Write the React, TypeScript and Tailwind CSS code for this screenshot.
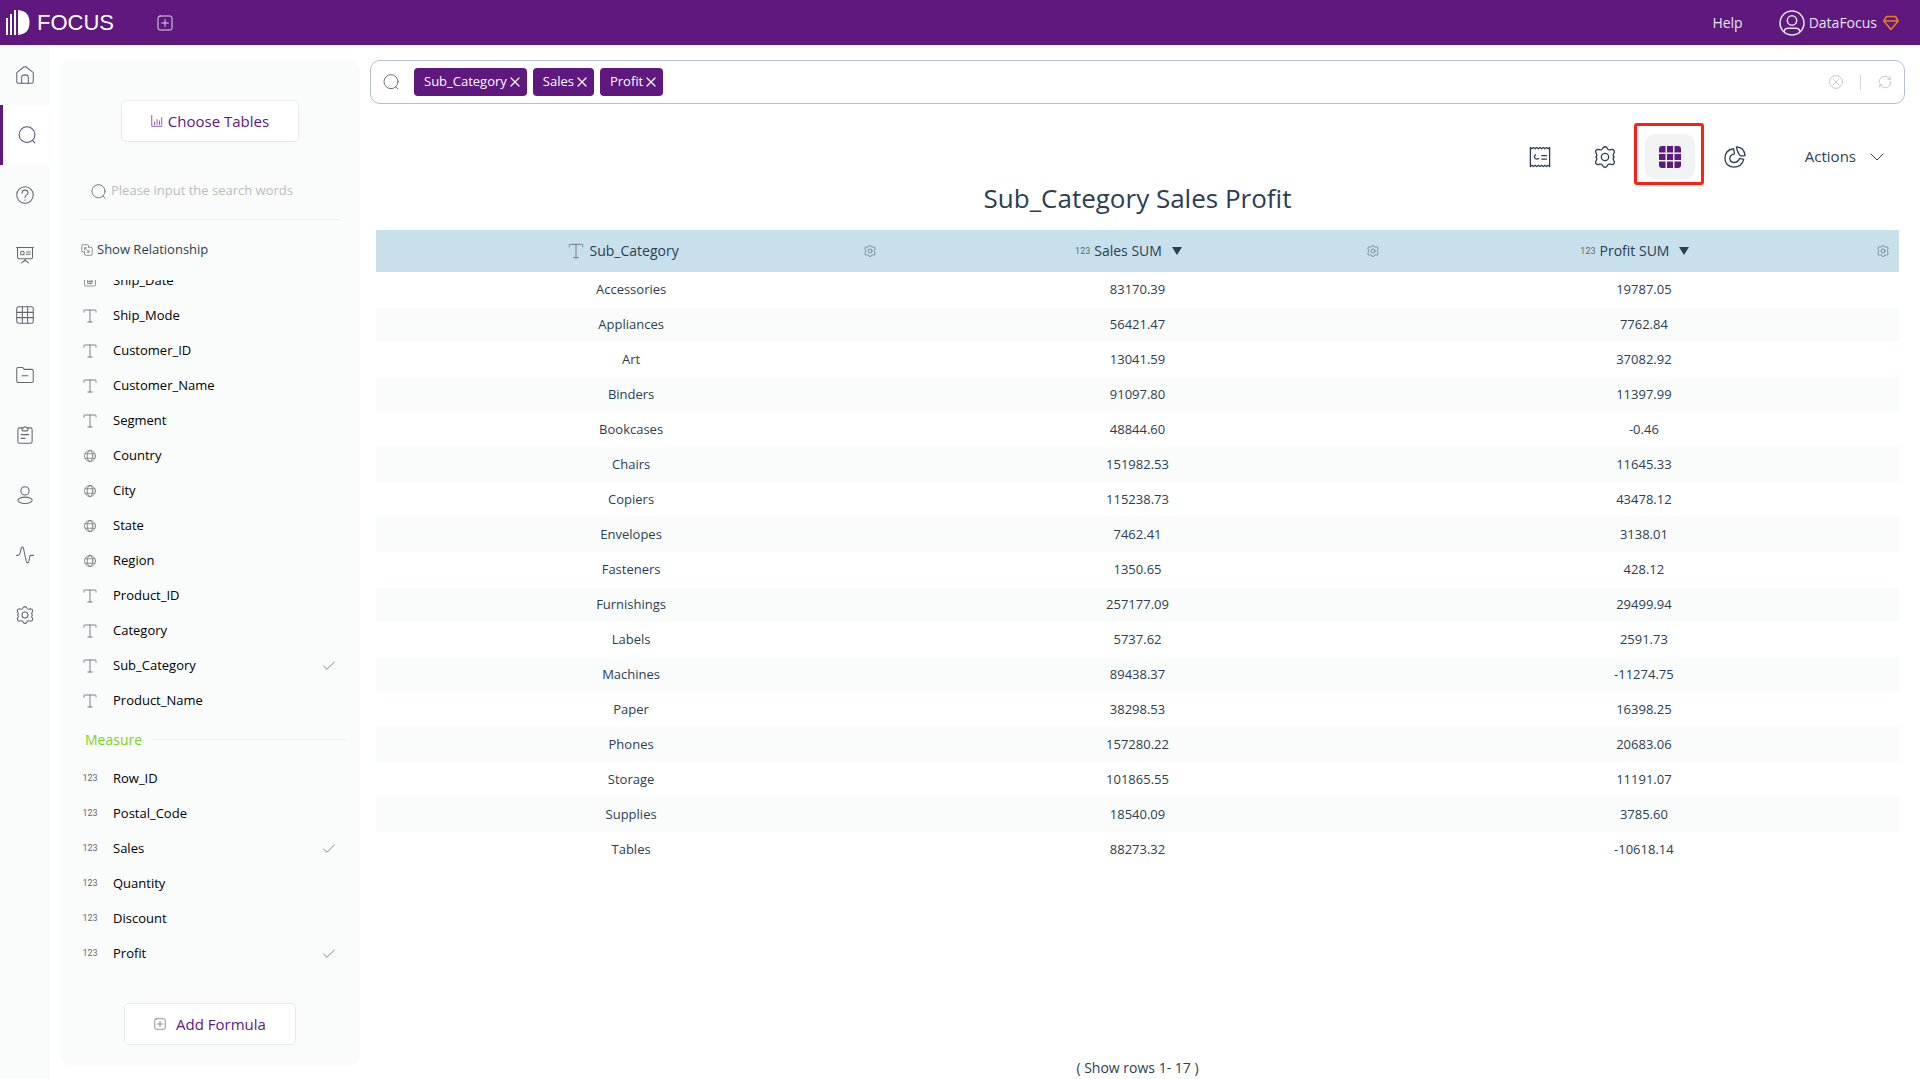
import { useState } from "react";
import type { ReactNode } from "react";
import { Check, ChevronDown, Type, X } from "lucide-react";
import clsx from "clsx";

type FieldKind = "text" | "date" | "geo" | "number";

interface Field {
  name: string;
  kind: FieldKind;
}

interface IconProps {
  className?: string;
  children?: ReactNode;
}

const attributes: Field[] = [
  { name: "Ship_Date", kind: "date" },
  { name: "Ship_Mode", kind: "text" },
  { name: "Customer_ID", kind: "text" },
  { name: "Customer_Name", kind: "text" },
  { name: "Segment", kind: "text" },
  { name: "Country", kind: "geo" },
  { name: "City", kind: "geo" },
  { name: "State", kind: "geo" },
  { name: "Region", kind: "geo" },
  { name: "Product_ID", kind: "text" },
  { name: "Category", kind: "text" },
  { name: "Sub_Category", kind: "text" },
  { name: "Product_Name", kind: "text" },
];

const measures: Field[] = [
  { name: "Row_ID", kind: "number" },
  { name: "Postal_Code", kind: "number" },
  { name: "Sales", kind: "number" },
  { name: "Quantity", kind: "number" },
  { name: "Discount", kind: "number" },
  { name: "Profit", kind: "number" },
];

const rows = [
  ["Accessories", "83170.39", "19787.05"],
  ["Appliances", "56421.47", "7762.84"],
  ["Art", "13041.59", "37082.92"],
  ["Binders", "91097.80", "11397.99"],
  ["Bookcases", "48844.60", "-0.46"],
  ["Chairs", "151982.53", "11645.33"],
  ["Copiers", "115238.73", "43478.12"],
  ["Envelopes", "7462.41", "3138.01"],
  ["Fasteners", "1350.65", "428.12"],
  ["Furnishings", "257177.09", "29499.94"],
  ["Labels", "5737.62", "2591.73"],
  ["Machines", "89438.37", "-11274.75"],
  ["Paper", "38298.53", "16398.25"],
  ["Phones", "157280.22", "20683.06"],
  ["Storage", "101865.55", "11191.07"],
  ["Supplies", "18540.09", "3785.60"],
  ["Tables", "88273.32", "-10618.14"],
];

const Icon = ({ className, children }: IconProps) => (
  <svg
    viewBox="0 0 24 24"
    fill="none"
    stroke="currentColor"
    strokeWidth="1.4"
    strokeLinecap="round"
    strokeLinejoin="round"
    aria-hidden="true"
    className={clsx("shrink-0", className)}
  >
    {children}
  </svg>
);

const SearchIcon = ({ className }: IconProps) => (
  <Icon className={className}>
    <circle cx="12" cy="11.5" r="10.5" />
    <path d="M19.500 19.500l3 3" />
  </Icon>
);

// Six rounded teeth, one pointing straight up
const GearIcon = ({ className }: IconProps) => (
  <Icon className={className}>
    <path d="M10 1.700Q12 0 14 1.700L15 3.300Q15.900 4.500 17.400 4.200L19.500 3.700Q22.300 4 22.300 6.600L21.200 9Q20.600 10.300 21.300 11.200L22 12L21.300 12.800Q20.600 13.700 21.200 15L22.300 17.400Q22.300 20 19.500 20.300L17.400 19.800Q15.900 19.500 15 20.700L14 22.300Q12 24 10 22.300L9 20.700Q8.100 19.500 6.600 19.800L4.500 20.300Q1.700 20 1.700 17.400L2.800 15Q3.400 13.700 2.700 12.800L2 12L2.700 11.200Q3.400 10.300 2.800 9L1.700 6.600Q1.700 4 4.500 3.700L6.600 4.200Q8.100 4.500 9 3.300Z" />
    <circle cx="12" cy="12" r="4" />
  </Icon>
);

const PlusBoxIcon = ({ className }: IconProps) => (
  <Icon className={className}>
    <rect x="1.5" y="1.5" width="21" height="21" rx="3" />
    <path d="M12 7v10M7 12h10" />
  </Icon>
);

const HomeIcon = ({ className }: IconProps) => (
  <Icon className={className}>
    <path d="M1 9.500Q1 8.700 1.700 8.200L10.500 1.300Q12 .2 13.500 1.300L22.300 8.200Q23 8.700 23 9.500V20.500Q23 23 20.500 23H3.500Q1 23 1 20.500Z" />
    <path d="M7.500 23V15.500q0-3.700 4.500-3.700t4.500 3.700V23" />
  </Icon>
);

const HelpIcon = ({ className }: IconProps) => (
  <Icon className={className}>
    <circle cx="12" cy="12" r="11" />
    <path d="M8 9.500Q8 5.500 12 5.500t4 3.800Q16 11.500 13.500 12.500 12 13.200 12 15.500M12 18.500v.4" />
  </Icon>
);

const BoardIcon = ({ className }: IconProps) => (
  <Icon className={className}>
    <path d="M.8 2h22.400M2 2v13q0 2 2 2h16q2 0 2-2V2M12 17v2.500M7.500 22.500L12 19l4.500 3.500" />
    <circle cx="8.500" cy="9.500" r="2.400" />
    <path d="M14 8h5M14 11h5" />
  </Icon>
);

const TableIcon = ({ className }: IconProps) => (
  <Icon className={className}>
    <rect x="1" y="1" width="22" height="22" rx="2.500" />
    <path d="M8.500 1v22M15.500 1v22M1 8.500h22M1 15.500h22" />
  </Icon>
);

const FolderIcon = ({ className }: IconProps) => (
  <Icon className={className}>
    <path d="M1 20V4q0-2 2-2h6l2 2.500h9.500q2.500 0 2.500 2.500v13q0 2-2 2H3q-2 0-2-2ZM8 13h8" />
  </Icon>
);

const ClipboardIcon = ({ className }: IconProps) => (
  <Icon className={className}>
    <path d="M7.500 2.500H5q-2.500 0-2.500 2.500v15.500Q2.500 23 5 23h14q2.500 0 2.500-2.500V5q0-2.500-2.500-2.500h-2.500" />
    <path d="M8 2.500h2Q12-.5 14 2.500h2V5q0 1.500-1.500 1.500h-5Q8 6.500 8 5ZM7 11.500h10M7 16.500h5" />
  </Icon>
);

const PersonIcon = ({ className }: IconProps) => (
  <Icon className={className}>
    <circle cx="12" cy="6.500" r="5.500" />
    <ellipse cx="12" cy="19" rx="9.500" ry="4.200" />
  </Icon>
);

const PulseIcon = ({ className }: IconProps) => (
  <Icon className={className}>
    <path d="M.8 12.500h2Q5 12.500 6 7t2.500-5.500Q10 1.500 11 8l2.500 12q.5 2.500 2 2.500t2-3.500.8-5.500q.5-1 2-1h2.900" />
  </Icon>
);

const RelationIcon = ({ className }: IconProps) => (
  <Icon className={className}>
    <path d="M7 16H4q-2.500 0-2.500-2.500V4Q1.500 1.500 4 1.500h8.500Q15 1.500 15 4v2" />
    <path d="M15 6.500h5q2.500 0 2.500 2.500v11q0 2.500-2.500 2.500H9.500Q7 22.500 7 20V16M7 7.500l9 9M7 11.500V7.500h4M12 16.500h4v-4" />
  </Icon>
);

const ChartIcon = ({ className }: IconProps) => (
  <Icon className={className}>
    <path d="M1.500 1v21.500h21M7 19v-5M12 19V9M17 19v-7M21.500 19V5" />
  </Icon>
);

const GlobeIcon = ({ className }: IconProps) => (
  <Icon className={className}>
    <circle cx="12" cy="12" r="11" />
    <ellipse cx="12" cy="12" rx="5.500" ry="11" />
    <path d="M2.500 7.500h19M2.500 16.500h19" />
  </Icon>
);

const DateIcon = ({ className }: IconProps) => (
  <Icon className={className}>
    <rect x="1" y="2" width="22" height="20" rx="2.500" />
    <path d="M8 9h8v8H8zM8 13h8M12 9v8" />
  </Icon>
);

const TicketIcon = ({ className }: IconProps) => (
  <Icon className={className}>
    <path d="M1.500 1.500v21l1.750-1.500 1.750 1.500 1.750-1.500 1.750 1.500 1.750-1.500 1.750 1.500 1.750-1.500 1.750 1.500 1.750-1.500 1.750 1.500 1.750-1.500 1.750 1.500v-21l-1.750 1.500-1.750-1.500-1.750 1.500-1.750-1.500-1.750 1.500-1.750-1.500-1.750 1.500-1.750-1.500-1.750 1.500-1.750-1.500-1.750 1.500Z" />
    <path d="M7 9.500q-1.800 1.500-.8 3.500 1.300 2 4.300.8M14 10.500h5M14 14.200h5" />
  </Icon>
);

const PieIcon = ({ className }: IconProps) => (
  <Icon className={className}>
    <path d="M10.500 3Q1.200 4 1 13.500 1.500 22.500 10.500 23q9 0 11-8.500l-4.500-1q-2 4.500-6 4.500-4.500-.3-4.700-4.500.2-4 5.200-5Z" />
    <path d="M13.500 1q8.500.5 9.500 9.500-4 .5-5.500 0Q14 6 13.500 1Z" />
  </Icon>
);

const LogoMark = () => (
  <svg viewBox="0 0 24 25" fill="#fff" className="h-[25px] w-6" aria-hidden="true">
    <rect x="0" y="8" width="2" height="17" />
    <rect x="4" y="4" width="2" height="21" />
    <rect x="8" y="0" width="2" height="25" />
    <path d="M12 0Q23.500 1 23.500 12.500T12 25Z" />
  </svg>
);

const navItems = [
  { label: "Home", icon: HomeIcon },
  { label: "Search", icon: SearchIcon },
  { label: "Questions", icon: HelpIcon },
  { label: "Boards", icon: BoardIcon },
  { label: "Tables", icon: TableIcon },
  { label: "Resources", icon: FolderIcon },
  { label: "Tasks", icon: ClipboardIcon },
  { label: "Users", icon: PersonIcon },
  { label: "Monitor", icon: PulseIcon },
  { label: "Settings", icon: GearIcon },
];

const NumberMark = () => (
  <span className="font-['Roboto','Liberation_Sans',sans-serif] text-[9px] leading-none text-[#66666e]">123</span>
);

const KindIcon = ({ kind }: { kind: FieldKind }) => {
  if (kind === "number") return <NumberMark />;
  if (kind === "geo") return <GlobeIcon className="size-3" />;
  if (kind === "date") return <DateIcon className="size-3" />;
  return <Type className="size-[18px]" strokeWidth={1.1} />;
};

const FieldRow = ({ field, checked }: { field: Field; checked: boolean }) => (
  <li>
    <button type="button" className="flex h-[35px] w-full items-center text-left text-[13px] text-black">
      <span className="flex w-6 justify-center text-[#66666e]">
        <KindIcon kind={field.kind} />
      </span>
      <span className="ml-[11px] flex-1">{field.name}</span>
      {checked && <Check className="mr-[23px] size-4 text-[#66666e]" strokeWidth={1.2} />}
    </button>
  </li>
);

const Header = () => (
  <header className="flex h-[45px] items-center bg-[#5e187e] px-[6px] text-white">
    <a href="#" className="flex items-center gap-[7px]">
      <LogoMark />
      <span className="font-['Liberation_Sans',sans-serif] text-[22px] leading-none">FOCUS</span>
    </a>
    <button type="button" aria-label="New" className="ml-[43px] text-gray-200">
      <PlusBoxIcon className="size-4" />
    </button>
    <a href="#" className="ml-auto text-sm text-gray-200">Help</a>
    <a href="#" className="mr-[15px] ml-9 flex items-center text-sm text-gray-200">
      <svg viewBox="0 0 26 26" fill="none" stroke="currentColor" strokeWidth="1.500" className="mr-1 size-[26px]" aria-hidden="true">
        <circle cx="13" cy="13" r="12" />
        <circle cx="13" cy="10.500" r="4.700" />
        <path d="M5 22q.5-3.800 4-3.800h8q3.500 0 4 3.800" />
      </svg>
      DataFocus
      <svg viewBox="0 0 16 16" fill="none" stroke="#e67e22" strokeWidth="1.600" strokeLinejoin="round" className="ml-[6px] size-4" aria-hidden="true">
        <path d="M3.500 1.500h9L15.200 6 8 14.500.8 6ZM1 6h14" />
      </svg>
    </a>
  </header>
);

const SideNav = () => (
  <nav className="w-[50px] shrink-0 bg-[#fafcfb]">
    {navItems.map(({ label, icon: NavIcon }) => (
      <a
        key={label}
        href="#"
        aria-label={label}
        className={clsx(
          "flex h-[60px] items-center justify-center",
          label === "Search" ? "border-l-[3px] border-[#5e187e] bg-white text-[#5e4a78]" : "text-[#66666e]"
        )}
      >
        <NavIcon className="size-[18px]" />
      </a>
    ))}
  </nav>
);

const FieldPanel = ({ selected }: { selected: string[] }) => (
  <aside className="mt-[15px] mb-[15px] ml-[10px] flex w-[300px] shrink-0 flex-col rounded-[10px] bg-[#fafcfb] pb-5">
    <button
      type="button"
      className="mt-10 flex h-[42px] w-[178px] items-center justify-center gap-[5px] self-center rounded-[5px] border border-[#e8eaf2] bg-white text-[15px] text-[#5e187e]"
    >
      <ChartIcon className="size-3" />
      Choose Tables
    </button>
    <label className="mx-5 mt-[39px] flex h-[39px] items-center gap-[5px] border-b border-[#e9eded] pb-[18px] pl-[11px] text-[#66666e]">
      <SearchIcon className="size-[15px]" />
      <input
        type="text"
        placeholder="Please input the search words"
        className="w-full bg-transparent text-[13px] outline-none placeholder:text-[#bbbbbb]"
      />
    </label>
    <a href="#" className="mt-5 ml-[21px] flex h-5 items-center gap-1 text-[13px] text-[#2c3e50]">
      <RelationIcon className="size-3 text-[#66666e]" />
      Show Relationship
    </a>
    {/* Scrolled to its end, so the first attribute is cut off at the top */}
    <div className="mt-5 flex h-[691px] flex-col justify-end overflow-hidden pl-[18px]">
      <ul className="shrink-0">
        {attributes.map((field) => (
          <FieldRow key={field.name} field={field} checked={selected.includes(field.name)} />
        ))}
      </ul>
      <h2 className="flex h-[43px] shrink-0 items-center gap-[10px] pr-[15px] pl-[7px] text-sm text-[#7ed321] after:h-px after:flex-1 after:bg-[#e9eded]">
        Measure
      </h2>
      <ul className="shrink-0">
        {measures.map((field) => (
          <FieldRow key={field.name} field={field} checked={selected.includes(field.name)} />
        ))}
      </ul>
    </div>
    <button
      type="button"
      className="mt-8 flex h-[42px] w-[172px] items-center justify-center gap-[10px] self-center rounded-[5px] border border-[#e8eaf2] bg-white text-[15px] text-[#5e187e]"
    >
      <PlusBoxIcon className="size-3 text-[#66666e]" />
      Add Formula
    </button>
  </aside>
);

const SearchBar = ({ keywords, onRemove }: { keywords: string[]; onRemove: (name: string) => void }) => (
  <div className="flex h-[44px] items-center rounded-[10px] border border-[#b4c0d0] bg-white px-3 text-[#66666e]">
    <SearchIcon className="size-4" />
    <div className="ml-[15px] flex gap-[6px]">
      {keywords.map((name) => (
        <span key={name} className="flex h-7 items-center rounded bg-[#5e187e] pr-1 pl-[10px] text-[13px] text-white">
          {name}
          <button type="button" aria-label={`Remove ${name}`} onClick={() => onRemove(name)}>
            <X className="size-4" strokeWidth={1.8} />
          </button>
        </span>
      ))}
    </div>
    <button type="button" aria-label="Clear" className="ml-auto text-[#bbbbbb]">
      <Icon className="size-[14px]">
        <circle cx="12" cy="12" r="11" />
        <path d="M7 7l10 10M17 7L7 17" />
      </Icon>
    </button>
    <span className="mx-[17px] h-[15px] w-px bg-gray-300" />
    <button type="button" aria-label="Refresh" className="text-[#bbbbbb]">
      <Icon className="size-[14px]">
        <path d="M2 13Q1.500 3 12 2q5 0 8.500 5M22 11q.5 10-10 11-5 0-8.500-5M21 3v4.500h-4M3 21v-4.500h4" />
      </Icon>
    </button>
  </div>
);

const Toolbar = () => (
  <div className="mt-[30px] flex h-[45px] items-center justify-end pr-4 text-[#2c3e50]">
    <button type="button" aria-label="Ticket">
      <TicketIcon className="size-[22px]" />
    </button>
    <button type="button" aria-label="Configure" className="ml-[43px]">
      <GearIcon className="size-[22px]" />
    </button>
    <button
      type="button"
      aria-label="Table view"
      className="relative ml-[29px] flex h-[45px] w-[50px] items-center justify-center rounded-[10px] bg-[#f2f4f4]"
    >
      <svg viewBox="0 0 22 22" className="size-[22px]" aria-hidden="true">
        <path
          fill="#5e187e"
          d="M3 0h3.500v6.500H0V3Q0 0 3 0ZM8 0h6v6.500H8ZM15.500 0H19q3 0 3 3v3.500h-6.500ZM0 8h6.500v6H0ZM8 8h6v6H8ZM15.500 8H22v6h-6.500ZM0 15.500h6.500V22H3q-3 0-3-3ZM8 15.500h6V22H8ZM15.500 15.500H22V19q0 3-3 3h-3.500Z"
        />
      </svg>
      {/* highlight frame */}
      <span className="absolute -top-[11px] -right-[9px] -bottom-[6px] -left-[11px] rounded-[3px] border-[3px] border-[#ff2015]" />
    </button>
    <button type="button" aria-label="Chart view" className="ml-[29px]">
      <PieIcon className="size-[22px]" />
    </button>
    <button type="button" className="ml-[59px] flex items-center gap-[9px] text-[15px]">
      Actions
      <ChevronDown className="size-6" strokeWidth={1} />
    </button>
  </div>
);

const columns = [
  { name: "Sub_Category", numeric: false, width: "w-[33.5%]" },
  { name: "Sales SUM", numeric: true, width: "w-[33%]" },
  { name: "Profit SUM", numeric: true, width: "w-[33.5%]" },
];

const ResultTable = () => (
  <table className="w-full table-fixed border-collapse text-center text-[13px] text-[#2c3e50]">
    <thead>
      <tr className="h-[42px] bg-[#c7e0ec]">
        {columns.map(({ name, numeric, width }) => (
          <th key={name} scope="col" className={clsx("p-0 text-sm font-normal", width)}>
            <div className="flex items-center pr-[10px]">
              <div className="flex flex-1 items-center justify-center gap-1 pl-1">
                {numeric ? <NumberMark /> : <Type className="size-5 text-[#66666e]" strokeWidth={1} />}
                {name}
                {numeric && (
                  <svg viewBox="0 0 10 8" fill="currentColor" className="ml-[6px] h-2 w-[10px]" aria-hidden="true">
                    <path d="M0 0h10L5 8Z" />
                  </svg>
                )}
              </div>
              <button type="button" aria-label={`${name} settings`} className="text-[#66666e]">
                <GearIcon className="size-3" />
              </button>
            </div>
          </th>
        ))}
      </tr>
    </thead>
    <tbody>
      {rows.map((row) => (
        <tr key={row[0]} className="h-[35px] even:bg-[#fafcfb]">
          {row.map((cell) => (
            <td key={cell} className="p-0">{cell}</td>
          ))}
        </tr>
      ))}
    </tbody>
  </table>
);

export default function App() {
  const [keywords, setKeywords] = useState(["Sub_Category", "Sales", "Profit"]);

  const removeKeyword = (name: string) => {
    setKeywords((prev) => prev.filter((k) => k !== name));
  };

  return (
    <div className="flex min-h-screen flex-col bg-white font-['Open_Sans','Noto_Sans',sans-serif]">
      <Header />
      <div className="flex flex-1">
        <SideNav />
        <FieldPanel selected={keywords} />
        <main className="flex min-w-0 flex-1 flex-col pt-[15px] pr-[15px] pl-[10px]">
          <SearchBar keywords={keywords} onRemove={removeKeyword} />
          <Toolbar />
          <h1 className="h-[51px] pt-[5px] text-center text-[26px] leading-[28px] text-[#2c3e50]">
            Sub_Category Sales Profit
          </h1>
          <div className="flex-1 px-[6px]">
            <ResultTable />
          </div>
          <p className="pb-[2px] text-center text-sm text-[#2c3e50]">( Show rows 1- 17 )</p>
        </main>
      </div>
    </div>
  );
}
